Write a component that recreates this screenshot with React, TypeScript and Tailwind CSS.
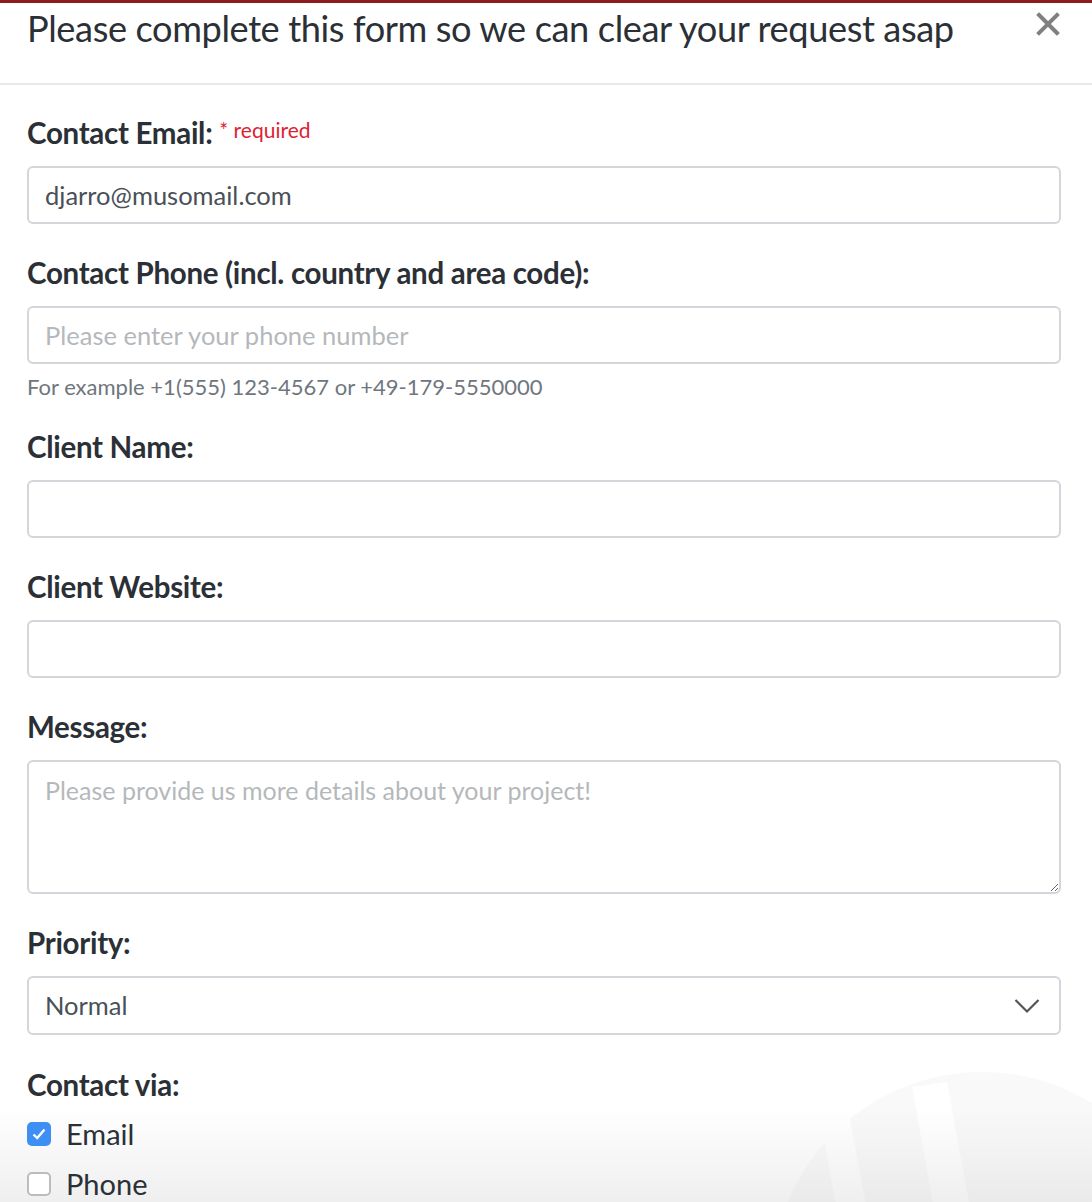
import { useState } from "react";

const labelCls = "block text-[29.5px] leading-[34px] font-bold text-[#2b3036] tracking-[-0.3px]";
const inputCls =
  "w-full h-[58px] px-[16px] border-2 border-[#d3d6da] rounded-[6px] text-[25.5px] text-[#495057] bg-white outline-none placeholder:text-[#b5b8bb]";

const Check = ({ checked, onToggle }: { checked: boolean; onToggle: () => void }) => (
  <button
    onClick={onToggle}
    className={
      "w-[24px] h-[24px] shrink-0 rounded-[5px] flex items-center justify-center " +
      (checked ? "bg-[#3d8ff3]" : "bg-white border-2 border-[#b9bcc0]")
    }
  >
    {checked && (
      <svg width="14" height="12" viewBox="0 0 14 12">
        <path d="M1.5 6.5 L5.2 10 L12.5 1.5" fill="none" stroke="#fff" strokeWidth="2.4" />
      </svg>
    )}
  </button>
);

const App = () => {
  const [email, setEmail] = useState("djarro@musomail.com");
  const [byEmail, setByEmail] = useState(true);
  const [byPhone, setByPhone] = useState(false);

  return (
    <div className="relative w-[1092px] h-[1202px] overflow-hidden bg-white font-['Lato',sans-serif] border-t-[3px] border-[#8e1b1f]">
      {/* bottom fade and faint logo */}
      <div className="absolute left-0 right-0 bottom-0 h-[95px] bg-gradient-to-b from-white to-[#efefef]" />
      <svg className="absolute right-[-110px] bottom-[-300px] opacity-[0.025]" width="440" height="440" viewBox="0 0 440 440">
        <circle cx="220" cy="220" r="210" fill="#444" />
        <path d="M85 40 L140 340 L110 345 L58 55 Z" fill="#fff" />
        <path d="M150 25 L205 330 L240 320 L185 20 Z" fill="#fff" />
      </svg>

      {/* header */}
      <div className="relative flex items-start justify-between h-[82px] border-b-2 border-[#e8e9eb] pl-[27px] pr-[31px]">
        <h1 className="text-[36.2px] leading-[46px] pt-[2px] text-[#2b3036] tracking-[-0.4px]">
          Please complete this form so we can clear your request asap
        </h1>
        <button className="mt-[8px] w-[26px] h-[26px] flex items-center justify-center">
          <svg width="24" height="24" viewBox="0 0 24 24">
            <path d="M3 3 L21 21 M21 3 L3 21" stroke="#808080" strokeWidth="4" strokeLinecap="square" />
          </svg>
        </button>
      </div>

      {/* form */}
      <div className="relative pl-[27px] pr-[31px] pt-[31px] flex flex-col">
        <div>
          <label className={labelCls}>
            Contact Email:{" "}
            <sup className="text-[21px] font-normal text-[#dc2434] relative top-[-6px] tracking-normal">* required</sup>
          </label>
          <input className={inputCls + " mt-[16px]"} value={email} onChange={(e) => setEmail(e.target.value)} />
        </div>

        <div className="mt-[32px]">
          <label className={labelCls}>Contact Phone (incl. country and area code):</label>
          <input className={inputCls + " mt-[16px]"} placeholder="Please enter your phone number" />
          <p className="mt-[9px] text-[22px] leading-[28px] text-[#6f767d]">For example +1(555) 123-4567 or +49-179-5550000</p>
        </div>

        <div className="mt-[29px]">
          <label className={labelCls}>Client Name:</label>
          <input className={inputCls + " mt-[16px]"} />
        </div>

        <div className="mt-[32px]">
          <label className={labelCls}>Client Website:</label>
          <input className={inputCls + " mt-[16px]"} />
        </div>

        <div className="mt-[32px]">
          <label className={labelCls}>Message:</label>
          <textarea
            className="mt-[16px] block w-full h-[134px] px-[16px] py-[10px] border-2 border-[#d3d6da] rounded-[6px] text-[25px] leading-[36px] text-[#495057] outline-none placeholder:text-[#b5b8bb]"
            placeholder="Please provide us more details about your project!"
          />
        </div>

        <div className="mt-[32px]">
          <label className={labelCls}>Priority:</label>
          <div className="relative mt-[16px]">
            <select className="w-full h-[59px] appearance-none px-[16px] border-2 border-[#d3d6da] rounded-[6px] text-[25.5px] text-[#495057] bg-white outline-none">
              <option>Normal</option>
              <option>High</option>
              <option>Urgent</option>
            </select>
            <svg className="absolute right-[21px] top-[22px] pointer-events-none" width="26" height="16" viewBox="0 0 26 16">
              <path d="M1.5 2 L13 13.5 L24.5 2" fill="none" stroke="#555" strokeWidth="2.2" />
            </svg>
          </div>
        </div>

        <div className="mt-[33px]">
          <label className={labelCls}>Contact via:</label>
          <div className="mt-[16px] flex flex-col gap-[18px]">
            <label className="flex items-center gap-[15px] text-[29px] leading-[32px] text-[#2b3036]">
              <Check checked={byEmail} onToggle={() => setByEmail(!byEmail)} />
              Email
            </label>
            <label className="flex items-center gap-[15px] text-[29px] leading-[32px] text-[#2b3036]">
              <Check checked={byPhone} onToggle={() => setByPhone(!byPhone)} />
              Phone
            </label>
          </div>
        </div>
      </div>
    </div>
  );
};

export default App;
